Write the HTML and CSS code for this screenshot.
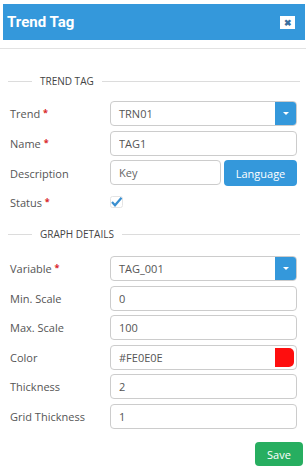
FILE: index.html
```html
<!DOCTYPE html>
<html lang="en">
  <head>
    <meta charset="UTF-8" />
    <title>Trend Tag</title>
    <link rel="stylesheet" href="styles.css">
  </head>
  <body>
    <div class="modal">
      <div class="modal-header">
        <h2>Trend Tag</h2>
        <span class="close">&#10006;</span>
      </div>

      <div class="modal-body">
        <div class="legend"><span>TREND TAG</span></div>

        <div class="row">
          <label>Trend <i>*</i></label>
          <div class="select">
            <span>TRN01</span>
            <b class="caret"></b>
          </div>
        </div>
        <div class="row">
          <label>Name <i>*</i></label>
          <input type="text" value="TAG1" />
        </div>
        <div class="row">
          <label>Description</label>
          <div class="group">
            <input type="text" placeholder="Key" />
            <button class="btn-blue">Language</button>
          </div>
        </div>
        <div class="row status">
          <label>Status <i>*</i></label>
          <span class="check">
            <svg width="13" height="12" viewBox="0 0 13 12"><rect x="0.5" y="0.5" width="12" height="11" rx="2" fill="none" stroke="#e4e4e4"/><path d="M2 6 L5 9.3 L11.5 1.8" fill="none" stroke="#3a8fd0" stroke-width="2.2"/></svg>
          </span>
        </div>

        <div class="legend second"><span>GRAPH DETAILS</span></div>

        <div class="row">
          <label>Variable <i>*</i></label>
          <div class="select">
            <span>TAG_001</span>
            <b class="caret"></b>
          </div>
        </div>
        <div class="row">
          <label>Min. Scale</label>
          <input type="text" value="0" />
        </div>
        <div class="row">
          <label>Max. Scale</label>
          <input type="text" value="100" />
        </div>
        <div class="row">
          <label>Color</label>
          <div class="color-box">
            <span>#FE0E0E</span>
            <b class="swatch"></b>
          </div>
        </div>
        <div class="row">
          <label>Thickness</label>
          <input type="text" value="2" />
        </div>
        <div class="row">
          <label>Grid Thickness</label>
          <input type="text" value="1" />
        </div>
      </div>

      <div class="modal-footer">
        <button class="btn-green">Save</button>
      </div>
    </div>
  </body>
</html>
```

FILE: styles.css
```css
body {
  margin: 0;
  padding: 0;
  background: #fff;
  font-family: "Open Sans", "Noto Sans", sans-serif;
  color: #555;
}

.modal-header {
  background-color: #3498db;
  color: #fff;
  margin: 4px 1px 0 3px;
  height: 36px;
  padding: 0 10px 0 4px;
  display: flex;
  align-items: center;
  justify-content: space-between;
}

.modal-header h2 {
  margin: 0;
  font-family: Roboto, sans-serif;
  font-size: 15px;
  font-weight: 700;
}

.close {
  width: 15px;
  height: 13px;
  background: #fff;
  color: #3a6f9f;
  font-size: 9px;
  font-weight: bold;
  display: flex;
  align-items: center;
  justify-content: center;
  margin-top: 1px;
}

.modal-body {
  margin-top: 8px;
  border-top: 1px solid #e2e2e2;
  padding: 22px 9px 0 10px;
}

/* section titles */
.legend {
  display: flex;
  align-items: center;
  font-size: 10px;
  color: #444;
  height: 20px;
  margin-left: -2px;
  margin-right: -3px;
  margin-bottom: 10px;
}

.legend::before {
  content: "";
  width: 24px;
  border-top: 1px solid #dcdcdc;
  margin-right: 8px;
}

.legend::after {
  content: "";
  flex: 1;
  border-top: 1px solid #dcdcdc;
  margin-left: 8px;
}

.legend.second {
  margin-top: 12px;
  margin-bottom: 12px;
}

.row {
  display: flex;
  align-items: center;
  margin-bottom: 4.5px;
}

.row label {
  width: 100px;
  flex-shrink: 0;
  font-size: 11px;
  color: #555;
}

.row label i {
  color: #d9262a;
  font-style: normal;
  font-weight: bold;
  font-size: 9px;
  vertical-align: 2px;
}

input[type="text"],
.select,
.color-box {
  flex: 1;
  width: 0;
  box-sizing: border-box;
  height: 25px;
  border: 1px solid #ccc;
  border-radius: 4px;
  padding: 0 8px;
  font-family: inherit;
  font-size: 11px;
  color: #555;
  outline: none;
  min-width: 0;
}

input::placeholder {
  color: #666;
}

.select,
.color-box {
  display: flex;
  align-items: center;
  justify-content: space-between;
  padding-right: 0;
  overflow: hidden;
}

.caret {
  width: 22px;
  height: 25px;
  background: #3498db;
  display: flex;
  align-items: center;
  justify-content: center;
  margin-right: -1px;
}

.caret::after {
  content: "";
  border-left: 3px solid transparent;
  border-right: 3px solid transparent;
  border-top: 3px solid #fff;
}

.color-box .swatch {
  width: 19px;
  height: 19px;
  background: #fe0e0e;
  border-radius: 0 5px 5px 0;
  margin-right: 2px;
}

.group {
  flex: 1;
  display: flex;
  gap: 3px;
  min-width: 0;
}

.btn-blue {
  background-color: #3498db;
  color: #fff;
  border: none;
  border-radius: 4px;
  height: 26px;
  width: 73px;
  flex-shrink: 0;
  font-family: inherit;
  font-size: 11px;
  cursor: pointer;
}

.status {
  height: 20px;
  margin-top: 6px;
}

.check {
  width: 13px;
  height: 12px;
  display: flex;
  align-items: center;
}

.modal-footer {
  display: flex;
  justify-content: flex-end;
  padding: 9px 3px 0 0;
}

.btn-green {
  background-color: #27ae60;
  color: #fff;
  border: none;
  border-radius: 4px;
  height: 24px;
  width: 48px;
  font-family: inherit;
  font-size: 11px;
  cursor: pointer;
}
```
